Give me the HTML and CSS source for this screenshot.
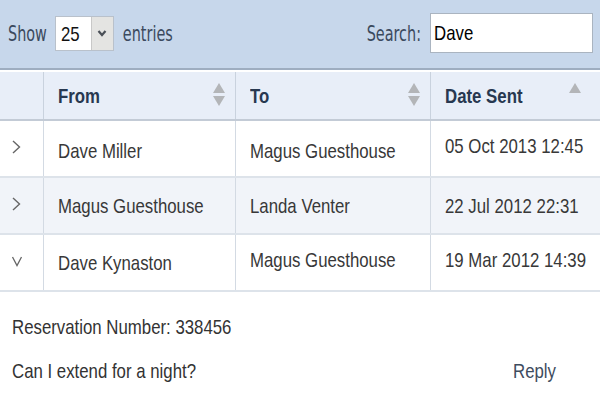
FILE: index.html
```html
<!DOCTYPE html>
<html>
    <head>
        <link rel="stylesheet" href="styles.css">
        <title>Messages</title>
    </head>
    <body>
        <div class="toolbar">
            <div class="length">
                <span class="label">Show</span>
                <div class="select">
                    <span class="select-value"><span class="n">25</span></span>
                    <span class="select-btn">
                        <svg width="10" height="8" viewBox="0 0 10 8"><path d="M1.5 2 L5 6 L8.5 2" fill="none" stroke="#4a4f57" stroke-width="2.2"/></svg>
                    </span>
                </div>
                <span class="label">entries</span>
            </div>
            <div class="search">
                <span class="label">Search:</span>
                <div class="search-box"><span class="n">Dave</span></div>
            </div>
        </div>

        <table class="messages">
            <thead>
                <tr>
                    <th class="col-toggle"></th>
                    <th class="col-from"><span class="n">From</span> <span class="sort both"></span></th>
                    <th class="col-to"><span class="n">To</span> <span class="sort both"></span></th>
                    <th class="col-date"><span class="n">Date Sent</span> <span class="sort up"></span></th>
                </tr>
            </thead>
            <tbody>
                <tr>
                    <td class="toggle"><svg width="10" height="16" viewBox="0 0 10 16"><path d="M2 2 L8.5 8 L2 14" fill="none" stroke="#666" stroke-width="1.4"/></svg></td>
                    <td class="down3"><span class="n">Dave Miller</span></td>
                    <td class="down3"><span class="n">Magus Guesthouse</span></td>
                    <td class="up4"><span class="n">05 Oct 2013 12:45</span></td>
                </tr>
                <tr class="alt">
                    <td class="toggle"><svg width="10" height="16" viewBox="0 0 10 16"><path d="M2 2 L8.5 8 L2 14" fill="none" stroke="#666" stroke-width="1.4"/></svg></td>
                    <td><span class="n">Magus Guesthouse</span></td>
                    <td><span class="n">Landa Venter</span></td>
                    <td><span class="n">22 Jul 2012 22:31</span></td>
                </tr>
                <tr>
                    <td class="toggle"><svg width="12" height="12" viewBox="0 0 12 12"><path d="M1.5 2 L6 10.5 L10.5 2" fill="none" stroke="#666" stroke-width="1.3"/></svg></td>
                    <td><span class="n">Dave Kynaston</span></td>
                    <td class="up4"><span class="n">Magus Guesthouse</span></td>
                    <td class="up4"><span class="n">19 Mar 2012 14:39</span></td>
                </tr>
            </tbody>
        </table>

        <div class="detail">
            <p><span class="n">Reservation Number: 338456</span></p>
            <div class="detail-row">
                <p><span class="n">Can I extend for a night?</span></p>
                <a class="reply"><span class="n">Reply</span></a>
            </div>
        </div>
    </body>
</html>
```

FILE: styles.css
```css
body {
    margin: 0;
    width: 600px;
    height: 400px;
    overflow: hidden;
    background: #fff;
    font-family: "Liberation Sans", Arial, sans-serif;
    color: #333;
}

/* narrow face: the screenshot uses a condensed Arial */
.n {
    display: inline-block;
    white-space: nowrap;
    transform: scaleX(0.8);
    transform-origin: left center;
}

.toolbar {
    height: 70px;
    box-sizing: border-box;
    background-color: #c7d7eb;
    border-bottom: 2px solid #9eadc0;
    display: flex;
    align-items: center;
    justify-content: space-between;
    padding: 0 7px 2px 8px;
    font-family: "DejaVu Sans Condensed", "DejaVu Sans", sans-serif;
    font-size: 16px;
    color: #3b4a5e;
}
.label {
    display: inline-block;
    transform: scaleY(1.3);
}

.length, .search {
    display: flex;
    align-items: center;
}

.select {
    display: flex;
    width: 59px;
    height: 35px;
    margin: 0 9px 0 8px;
    box-sizing: border-box;
    border: 1px solid #b9c1cb;
    background: #fff;
}
.select-value {
    flex: 1;
    padding-left: 5px;
    line-height: 33px;
    font-family: "Liberation Sans", sans-serif;
    font-size: 21px;
    color: #111;
}
.select-btn {
    width: 21px;
    background: #e4e4e2;
    border-left: 1px solid #c8c8c8;
    display: flex;
    align-items: center;
    justify-content: center;
}

.search-box {
    width: 163px;
    height: 40px;
    margin-left: 9px;
    box-sizing: border-box;
    border: 1px solid #aab4c0;
    background: #fff;
    padding-left: 3px;
    line-height: 38px;
    font-family: "Liberation Sans", sans-serif;
    font-size: 21px;
    color: #000;
}

.messages {
    width: 600px;
    table-layout: fixed;
    border-collapse: collapse;
    margin-top: 2px;
    font-size: 21px;
}

.messages th {
    box-sizing: border-box;
    height: 48px;
    background-color: #e8eef8;
    color: #273850;
    text-align: left;
    font-weight: bold;
    padding: 0 0 0 14px;
    position: relative;
    white-space: nowrap;
    border-left: 1px solid #c9d2de;
    border-bottom: 2px solid #c3cbd6;
}
.messages th:first-child {
    border-left: none;
}

.col-toggle { width: 43px; }
.col-from { width: 192px; }
.col-to { width: 195px; }
.col-date { width: 170px; }

.messages td {
    box-sizing: border-box;
    height: 57px;
    line-height: 24px;
    padding: 0 0 0 14px;
    white-space: nowrap;
    overflow: hidden;
    border-left: 1px solid #d3dae3;
    border-bottom: 2px solid #dde3ea;
    color: #383838;
}
.messages td:first-child {
    border-left: none;
}
.messages tr.alt td {
    background-color: #f1f4f9;
}
.messages td.down3 { padding-top: 4px; }
.messages td.up4 { padding-bottom: 6px; }
.messages td.toggle {
    padding: 0 0 4px 11px;
}
.toggle svg {
    display: block;
}

.sort {
    position: absolute;
    top: 9px;
    width: 12px;
    height: 27px;
}
.col-from .sort, .col-to .sort { right: 10px; }
.col-date .sort { right: 19px; }
.sort::before, .sort::after {
    content: "";
    position: absolute;
    left: 0;
    border-left: 6px solid transparent;
    border-right: 6px solid transparent;
}
.sort.both::before, .sort.up::before {
    top: 2px;
    border-bottom: 10px solid #b3b5b8;
}
.sort.both::after {
    top: 15px;
    border-top: 10px solid #b3b5b8;
}

.detail {
    padding: 13px 0 0 12px;
    font-size: 21px;
    color: #333;
}
.detail p {
    margin: 0;
    line-height: 44px;
}
.detail-row {
    display: flex;
    justify-content: space-between;
}
.reply {
    width: 87px;
    color: #3e4c5e;
    line-height: 44px;
}
```
